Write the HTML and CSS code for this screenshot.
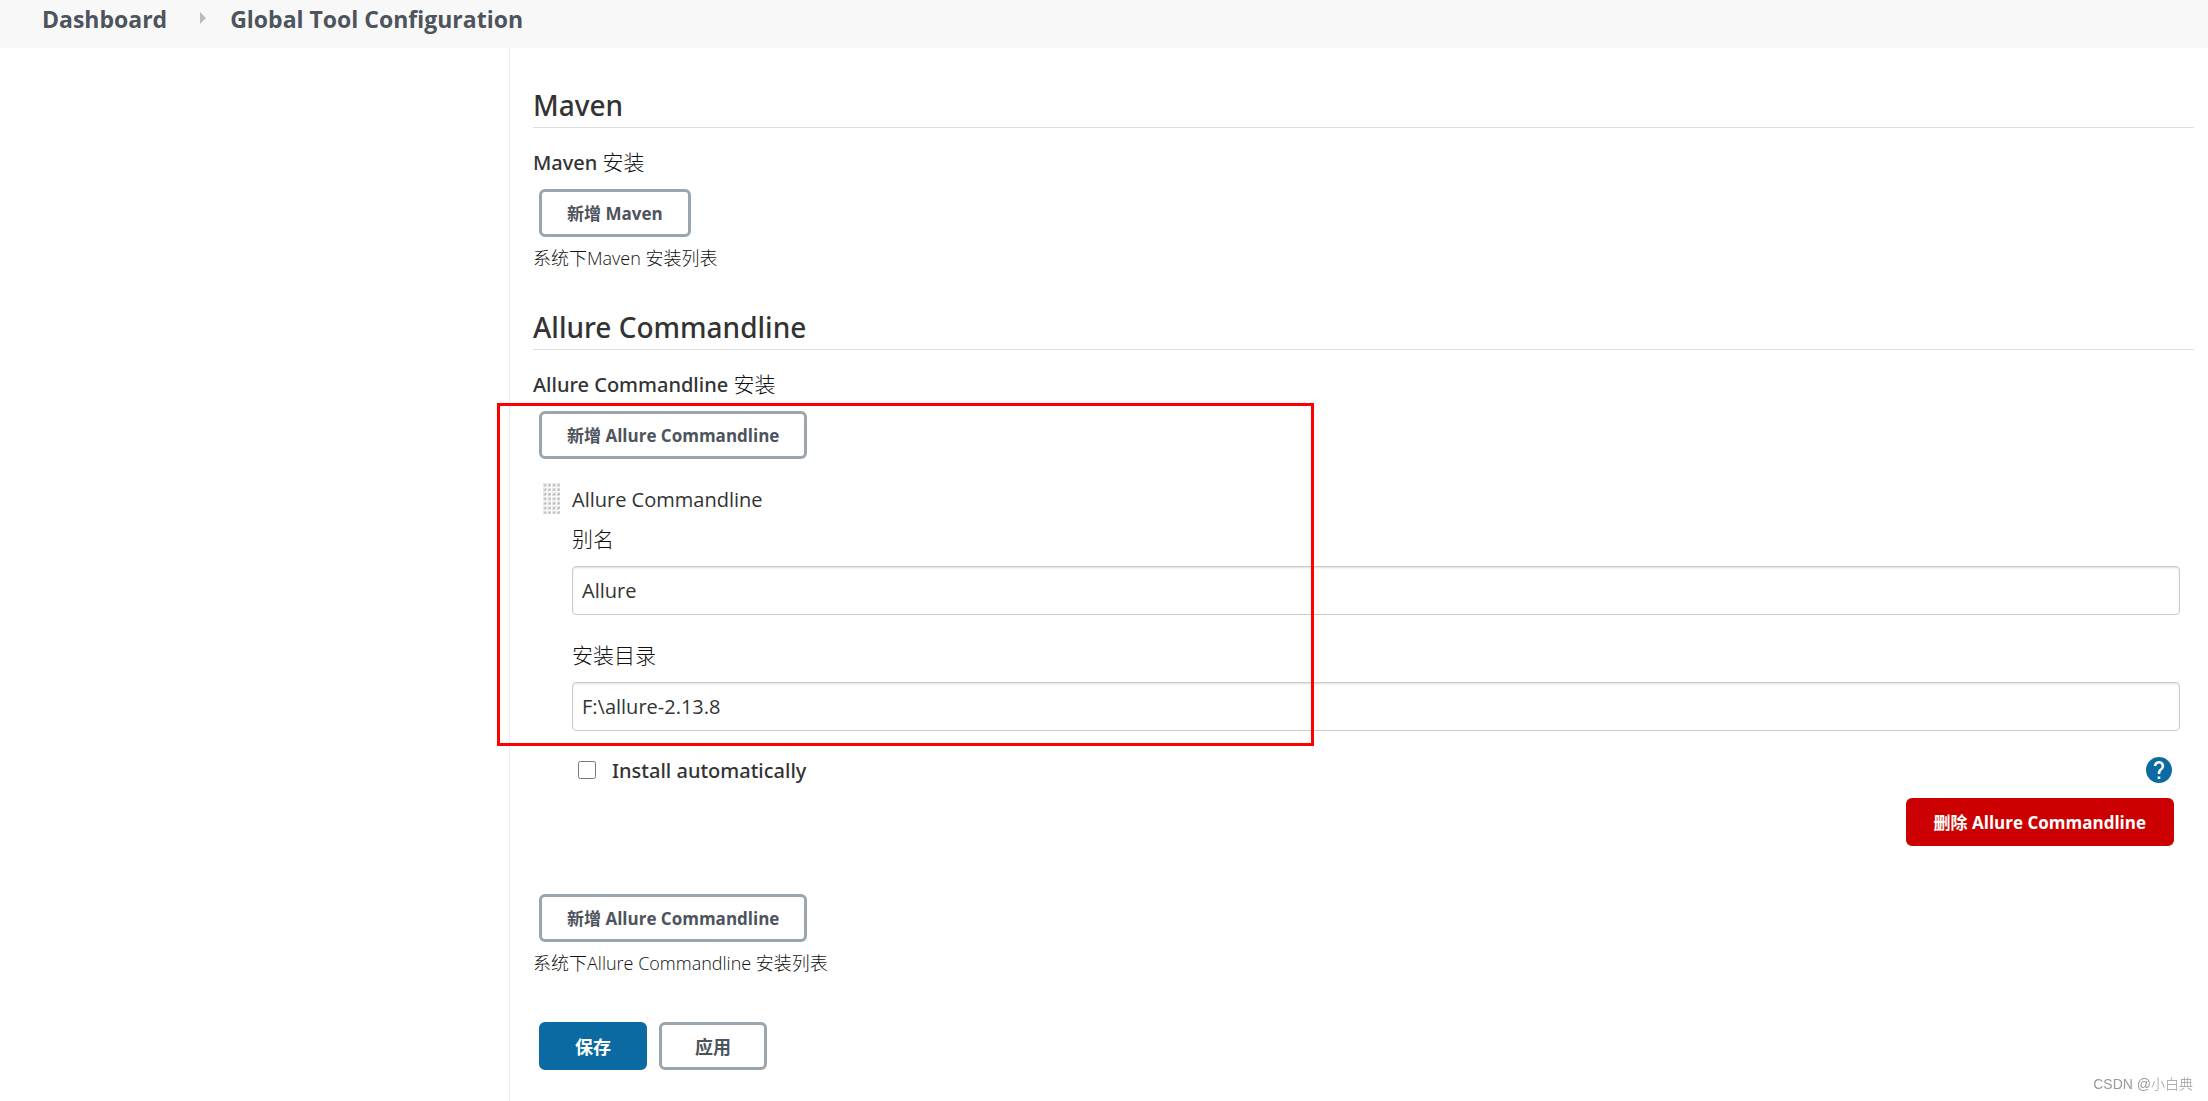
FILE: index.html
```html
<!DOCTYPE html>
<html lang="zh-CN">
<head>
<meta charset="utf-8">
<meta name="viewport" content="width=device-width, initial-scale=1">
<title>Global Tool Configuration</title>
<link rel="stylesheet" href="styles.css">
</head>
<body>
<nav class="breadcrumbs">
  <a href="#">Dashboard</a>
  <svg class="crumb-arrow" viewBox="0 0 6 12" aria-hidden="true"><path d="M0 0L6 6L0 12Z"/></svg>
  <a href="#">Global Tool Configuration</a>
</nav>
<div class="page">
  <aside class="sidebar"></aside>
  <main class="content">
    <form class="config">
      <section class="section">
        <h2 class="section-title">Maven</h2>
        <h3 class="field-title">Maven <span class="light">安装</span></h3>
        <button type="button" class="btn">新增 Maven</button>
        <p class="hint">系统下Maven 安装列表</p>
      </section>

      <section class="section">
        <h2 class="section-title">Allure Commandline</h2>
        <h3 class="field-title">Allure Commandline <span class="light">安装</span></h3>
        <div class="installations">
          <button type="button" class="btn">新增 Allure Commandline</button>
          <div class="tool">
            <svg class="handle" viewBox="0 0 17 31" aria-hidden="true">
              <defs>
                <pattern id="grip" width="4.5" height="4.6" patternUnits="userSpaceOnUse">
                  <path d="M0 3.2H3.2V0Z" fill="#aaa"/><path d="M0 3.2V0H3.2Z" fill="#e6e6e2"/>
                </pattern>
              </defs>
              <rect width="17" height="31" fill="url(#grip)"/>
            </svg>
            <div class="tool-body">
              <div class="tool-name">Allure Commandline</div>
              <div class="field">
                <label for="name">别名</label>
                <input id="name" class="text-input" type="text" value="Allure">
              </div>
              <div class="field">
                <label for="home">安装目录</label>
                <input id="home" class="text-input" type="text" value="F:\allure-2.13.8">
              </div>
              <div class="option">
                <input id="auto" class="check" type="checkbox">
                <label for="auto">Install automatically</label>
                <a class="help" href="#" aria-label="Help">
                  <svg viewBox="2 2 20 20" aria-hidden="true"><path d="M12 2C6.48 2 2 6.48 2 12s4.480 10 10 10 10-4.480 10-10S17.520 2 12 2zm1 17h-2v-2h2v2zm2.070-7.750l-.9.920C13.450 12.900 13 13.500 13 15h-2v-.5c0-1.100.450-2.100 1.170-2.830l1.240-1.260c.370-.360.590-.860.590-1.410 0-1.100-.9-2-2-2s-2 .9-2 2H8c0-2.210 1.790-4 4-4s4 1.790 4 4c0 .880-.360 1.680-.930 2.250z"/></svg>
                </a>
              </div>
              <div class="remove">
                <button type="button" class="btn danger">删除 Allure Commandline</button>
              </div>
            </div>
          </div>
          <div class="highlight" aria-hidden="true"></div>
        </div>
        <button type="button" class="btn">新增 Allure Commandline</button>
        <p class="hint">系统下Allure Commandline 安装列表</p>
      </section>

      <div class="actions">
        <button type="submit" class="btn primary wide">保存</button>
        <button type="button" class="btn wide">应用</button>
      </div>
    </form>
  </main>
</div>
<div class="watermark">CSDN @小白典</div>
</body>
</html>
```
FILE: styles.css
```css
* { box-sizing: border-box; }

body {
  margin: 0;
  min-height: 100vh;
  display: flex;
  flex-direction: column;
  background: #fff;
  color: #333;
  font-family: "Open Sans", "Noto Sans CJK SC", sans-serif;
  font-size: 20px;
  line-height: 30px;
}

h2, h3, p { margin: 0; }

.breadcrumbs {
  display: flex;
  align-items: center;
  height: 48px;
  padding: 0 42px 10px;
  background: #f8f8f8;
  font-size: 23px;
  font-weight: 700;
}
.breadcrumbs a { color: #4d545d; text-decoration: none; }
.crumb-arrow { width: 6px; height: 12px; margin: 0 24px 2px 33px; fill: #bbb; }

.page { flex: 1; display: grid; grid-template-columns: 510px 1fr; }
.sidebar { border-right: 1px solid #eaeff2; }
.content { padding: 36px 14px 31px 23px; }

.section { margin-bottom: 33px; }
.section:last-of-type { margin-bottom: 44px; }
.section-title {
  height: 44px;
  border-bottom: 1px solid #ddd;
  font-family: "Noto Sans", "Noto Sans CJK SC", sans-serif;
  font-size: 28px;
  font-weight: 500;
  line-height: 42px;
}
.field-title {
  height: 61px;
  padding-top: 19px;
  font-family: "Noto Sans", "Noto Sans CJK SC", sans-serif;
  font-size: 20px;
  font-weight: 500;
  line-height: 30px;
}
.light, .field label, .hint { color: #111; font-weight: 300; }
.light { font-size: 21px; }

.btn {
  display: block;
  height: 48px;
  margin-left: 6px;
  padding: 1px 25px 0;
  border: 3px solid #9aa5ae;
  border-radius: 6px;
  background: #fff;
  color: #4d545d;
  font: 700 17px/24px "Open Sans", "Noto Sans CJK SC", sans-serif;
}
.wide { width: 108px; font-size: 18px; }
.primary { border-color: #0b6aa2; background: #0b6aa2; color: #fff; }
.danger { border-color: #c00; background: #c00; color: #fff; }

.hint { padding: 7px 0 1px; font-size: 18px; line-height: 28px; }

.installations { position: relative; }
.highlight {
  position: absolute;
  left: -36px;
  top: -8px;
  width: 817px;
  height: 343px;
  border: 3px solid #f00;
  pointer-events: none;
}

.tool { display: flex; gap: 12px; padding: 24px 14px 48px 10px; }
.handle { width: 17px; height: 31px; }
.tool-body { flex: 1; }
.tool-name { height: 40px; line-height: 34px; }

.field { margin-bottom: 24px; }
.field label { display: block; height: 43px; font-size: 21px; line-height: 32px; }
.text-input {
  display: block;
  width: 100%;
  height: 49px;
  padding: 0 9px;
  border: 1px solid #ccc;
  border-radius: 4px;
  background: #fff;
  box-shadow: inset 0 1px 2px #ddd;
  color: #333;
  font: 400 20px/30px "Open Sans", "Noto Sans CJK SC", sans-serif;
}

.option { display: flex; align-items: center; height: 34px; padding: 0 8px 4px 6px; }
.option label {
  margin-left: 16px;
  padding-top: 2px;
  font-family: "Noto Sans", sans-serif;
  font-weight: 500;
}
.check { width: 18px; height: 18px; margin: 0; }
.help { display: block; width: 26px; height: 26px; margin-left: auto; }
.help svg { display: block; fill: #0b6aa2; }

.remove { display: flex; justify-content: flex-end; padding: 9px 6px 0 0; }

.actions { display: flex; gap: 6px; }

.watermark {
  position: fixed;
  right: 15px;
  bottom: 7px;
  color: #999;
  font: 300 14px/20px "Liberation Sans", "Noto Sans CJK SC", sans-serif;
}
```
